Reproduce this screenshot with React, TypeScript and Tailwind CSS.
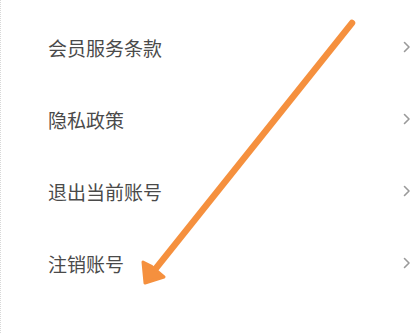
import React from 'react'

const items = ['会员服务条款', '隐私政策', '退出当前账号', '注销账号']

function Chevron() {
  return (
    <svg width="8" height="12" viewBox="0 0 8 12" className="shrink-0">
      <path d="M1.5 1.5 L6 6 L1.5 10.5" fill="none" stroke="#9a9a9a" strokeWidth="1.6" strokeLinecap="round" strokeLinejoin="round" />
    </svg>
  )
}

export default function App() {
  return (
    <div
      className="relative w-[420px] h-[333px] bg-white overflow-hidden border-l border-dotted border-[#d8d8d8]"
      style={{ fontFamily: '"Noto Sans CJK SC", "Noto Sans", sans-serif' }}
    >
      <ul className="flex flex-col pt-[11px]">
        {items.map((label) => (
          <li key={label} className="flex h-[72px] items-center justify-between pl-[47px] pr-[9px]">
            <span className="text-[19px] leading-none text-[#4a4a4a]">{label}</span>
            <Chevron />
          </li>
        ))}
      </ul>

      {/* annotation arrow */}
      <svg className="absolute inset-0 pointer-events-none" width="420" height="333" viewBox="0 0 420 333">
        <line x1="351" y1="23" x2="152" y2="272" stroke="#f5903e" strokeWidth="6.5" strokeLinecap="round" />
        <path d="M144 283 L142 262 L150 266 L163 277 Z" fill="#f5903e" stroke="#f5903e" strokeWidth="3" strokeLinejoin="round" />
      </svg>
    </div>
  )
}
